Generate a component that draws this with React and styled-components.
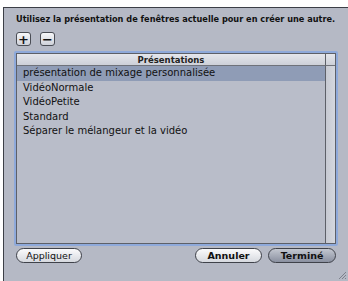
import React from 'react';
import styled, { createGlobalStyle } from 'styled-components';

const Global = createGlobalStyle`
  html, body {
    margin: 0;
    background: #fff;
  }
  body {
    font-family: 'DejaVu Sans', 'Liberation Sans', sans-serif;
    overflow: hidden;
  }
`;

const Window = styled.div`
  margin: 7px 0 0 3px;
  height: 274px;
  box-sizing: border-box;
  border-top: 1px solid #3c3f47;
  border-left: 1px solid #3c3f47;
  background: #b5b9c5;
  padding: 5px 10px 0 10px;
  display: flex;
  flex-direction: column;
  position: relative;
`;

const Title = styled.div`
  font-family: 'DejaVu Sans Condensed', 'DejaVu Sans', sans-serif;
  font-stretch: condensed;
  font-size: 9.1px;
  font-weight: bold;
  color: #111;
  white-space: nowrap;
  padding-left: 2px;
  height: 13px;
  line-height: 13px;
`;

const Tools = styled.div`
  display: flex;
  gap: 9px;
  margin: 6px 0 0 2px;
`;

const ToolButton = styled.div`
  width: 13px;
  height: 12px;
  border: 1px solid #4a4d55;
  border-radius: 3px;
  background: linear-gradient(#f6f7f9, #cfd2da);
  display: flex;
  align-items: center;
  justify-content: center;
  font-size: 13px;
  font-weight: bold;
  line-height: 1;
  color: #111;
`;

const Focus = styled.div`
  margin-top: 5px;
  height: 195px;
  box-sizing: border-box;
  border: 2px solid #8ea9da;
  border-radius: 2px;
  display: flex;
`;

const ListBox = styled.div`
  flex: 1;
  border: 1px solid #5d6068;
  background: #b9bdc9;
  display: grid;
  grid-template-columns: 1fr 10px;
  grid-template-rows: 12px 1fr;
`;

const Header = styled.div`
  background: linear-gradient(#e4e6ec, #cdd0d8);
  border-bottom: 1px solid #6f727a;
  font-size: 8.5px;
  font-weight: bold;
  color: #222;
  text-align: center;
  line-height: 12px;
`;

const Corner = styled.div`
  background: linear-gradient(#e4e6ec, #cdd0d8);
  border-left: 1px solid #5d6068;
  border-bottom: 1px solid #6f727a;
`;

const Rows = styled.div`
  display: flex;
  flex-direction: column;
`;

const Row = styled.div`
  height: 14.5px;
  line-height: 14.5px;
  font-size: 10px;
  color: #111;
  padding-left: 6px;
  white-space: nowrap;
  background: ${p => (p.$selected ? '#8f9cb6' : 'transparent')};
`;

const Scroll = styled.div`
  border-left: 1px solid #5d6068;
  background: linear-gradient(90deg, #c6c9d2, #d4d7de);
`;

const Footer = styled.div`
  display: flex;
  align-items: center;
  margin-top: 2px;
  padding-left: 2px;
  padding-right: 2px;
`;

const Pill = styled.div`
  height: 13px;
  width: ${p => p.$w}px;
  margin-left: ${p => p.$ml || 0}px;
  border: 1px solid #3f424a;
  border-radius: 8px;
  background: ${p =>
    p.$default
      ? 'linear-gradient(#c3c7d0, #8a90a0)'
      : 'linear-gradient(#fbfbfc, #d6d9df)'};
  font-size: 9.5px;
  font-weight: ${p => (p.$bold ? 'bold' : 'normal')};
  color: #111;
  text-align: center;
  line-height: 13px;
`;

const Spacer = styled.div`
  flex: 1;
`;

const Grip = styled.svg`
  position: absolute;
  right: 1px;
  bottom: 1px;
`;

const items = [
  'présentation de mixage personnalisée',
  'VidéoNormale',
  'VidéoPetite',
  'Standard',
  'Séparer le mélangeur et la vidéo',
];

export default function App() {
  return (
    <>
      <Global />
      <Window>
        <Title>Utilisez la présentation de fenêtres actuelle pour en créer une autre.</Title>
        <Tools>
          <ToolButton>+</ToolButton>
          <ToolButton>−</ToolButton>
        </Tools>
        <Focus>
          <ListBox>
            <Header>Présentations</Header>
            <Corner />
            <Rows>
              {items.map((t, i) => (
                <Row key={t} $selected={i === 0}>{t}</Row>
              ))}
            </Rows>
            <Scroll />
          </ListBox>
        </Focus>
        <Footer>
          <Pill $w={64}>Appliquer</Pill>
          <Spacer />
          <Pill $w={65} $bold>Annuler</Pill>
          <Pill $w={66} $ml={6} $bold $default>Terminé</Pill>
        </Footer>
        <Grip width="10" height="10" viewBox="0 0 10 10">
          <path d="M9 2 L2 9 M9 5 L5 9 M9 8 L8 9" stroke="#7d818c" strokeWidth="1" />
        </Grip>
      </Window>
    </>
  );
}
